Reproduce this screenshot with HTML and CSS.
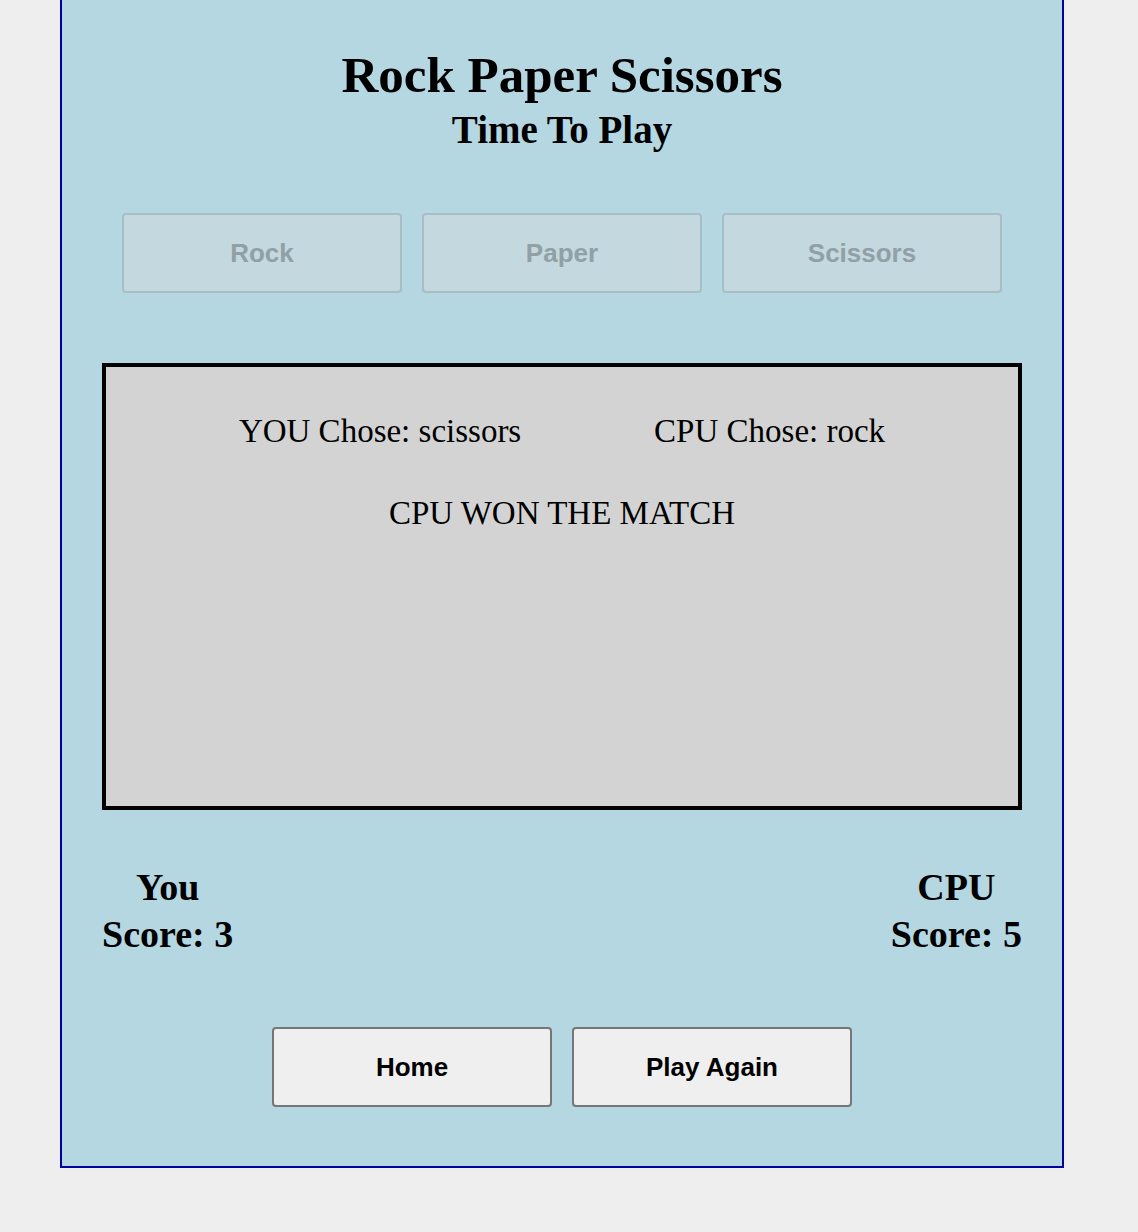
FILE: index.html
```html
<!DOCTYPE html>
<html lang="en">
<head>
<meta charset="utf-8">
<title>Rock Paper Scissors</title>
<link rel="stylesheet" href="styles.css">
</head>
<body>
<main class="game">
  <h1 class="title">Rock Paper Scissors</h1>
  <h2 class="subtitle">Time To Play</h2>
  <div class="choices">
    <button class="choice" disabled>Rock</button>
    <button class="choice" disabled>Paper</button>
    <button class="choice" disabled>Scissors</button>
  </div>
  <section class="board">
    <div class="picks">
      <p class="pick">YOU Chose: scissors</p>
      <p class="pick">CPU Chose: rock</p>
    </div>
    <p class="result">CPU WON THE MATCH</p>
  </section>
  <div class="scores">
    <div class="score"><div>You</div><div>Score: 3</div></div>
    <div class="score"><div>CPU</div><div>Score: 5</div></div>
  </div>
  <div class="actions">
    <button class="action">Home</button>
    <button class="action">Play Again</button>
  </div>
</main>
</body>
</html>
```
FILE: styles.css
```css
html, body {
  margin: 0;
  padding: 0;
  background: #eeeeee;
}
body {
  min-height: 1232px;
}
.game {
  box-sizing: border-box;
  width: 1004px;
  margin-left: 60px;
  background: #b4d7e2;
  border: 2px solid #00009a;
  border-top: none;
  padding: 46px 0 59px;
  font-family: "Liberation Serif", serif;
  color: #000;
}
.title {
  margin: 0;
  font-size: 51px;
  line-height: 58px;
  font-weight: bold;
  text-align: center;
}
.subtitle {
  margin: 3px 0 0;
  font-size: 39px;
  line-height: 46px;
  font-weight: bold;
  text-align: center;
}
.choices {
  display: flex;
  justify-content: center;
  gap: 20px;
  margin-top: 60px;
}
.choice {
  box-sizing: border-box;
  width: 280px;
  height: 80px;
  background: #c4d8df;
  border: 2px solid #a8bec7;
  border-radius: 4px;
  color: #919fa6;
  font-family: "Liberation Sans", Arial, sans-serif;
  font-weight: bold;
  font-size: 26px;
}
.board {
  box-sizing: border-box;
  margin: 70px 40px 0;
  height: 447px;
  border: 4px solid #000;
  background: #d3d3d3;
  padding-top: 44px;
}
.picks {
  display: flex;
  justify-content: space-evenly;
}
.pick {
  margin: 0;
  font-size: 33px;
  line-height: 40px;
}
.result {
  margin: 42px 0 0;
  font-size: 33px;
  line-height: 40px;
  text-align: center;
}
.scores {
  display: flex;
  justify-content: space-between;
  margin: 54px 40px 0;
}
.score {
  font-size: 38px;
  line-height: 47px;
  font-weight: bold;
  text-align: center;
}
.actions {
  display: flex;
  justify-content: center;
  gap: 20px;
  margin-top: 69px;
}
.action {
  box-sizing: border-box;
  width: 280px;
  height: 80px;
  background: #efefef;
  border: 2px solid #767676;
  border-radius: 4px;
  color: #000;
  font-family: "Liberation Sans", Arial, sans-serif;
  font-weight: bold;
  font-size: 26px;
}
```
